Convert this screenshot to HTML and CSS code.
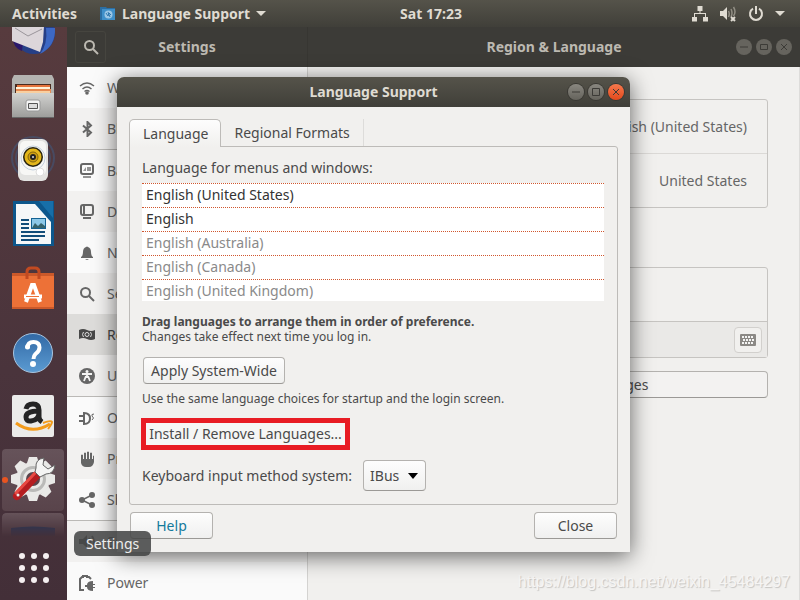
FILE: index.html
```html
<!DOCTYPE html>
<html lang="en">
<head>
<meta charset="utf-8">
<title>Language Support</title>
<link rel="stylesheet" href="styles.css">
</head>
<body>
<header class="topbar">
  <button class="top-item" type="button">Activities</button>
  <button class="top-item app-menu" type="button">
    <svg width="16" height="16" viewBox="0 0 16 16" aria-hidden="true"><path d="M0 1h6l1 1h8v12H0z" fill="#2b6ea3"/><path d="M2 3h13v11H2z" fill="#3f8fc9"/><circle cx="8.500" cy="8.500" r="4" fill="#9cc7e6"/><path d="M6 7l2 3 1-3 2 2M8 6l2 5" stroke="#2f77ae" fill="none"/></svg>
    <span>Language Support</span>
    <svg width="10" height="6" viewBox="0 0 10 6" aria-hidden="true"><path d="M0 0h10L5 5z" fill="#dfdbd2"/></svg>
  </button>
  <time class="clock">Sat 17:23</time>
  <button class="top-item status" type="button" aria-label="System">
    <svg width="16" height="16" viewBox="0 0 16 16" fill="#dfdbd2" aria-hidden="true"><path d="M5.500 0h5v5h-2v2H14v4h2v4.500h-5V11h2V8H3v3h2v4.500H0V11h2V7h5.500V5h-2z"/></svg>
    <svg width="18" height="16" viewBox="0 0 18 16" aria-hidden="true"><path d="M1 5h3l4-4v13l-4-4H1z" fill="#dfdbd2"/><g fill="none" stroke="#918e84" stroke-width="1.500"><path d="M9.500 5q1.500 3 0 6M12 3q2 4 0 8M14.500 1q3 5 0 9"/></g><path d="M12 11l4 4M16 11l-4 4" stroke="#dfdbd2" stroke-width="2"/></svg>
    <svg width="16" height="16" viewBox="0 0 16 16" fill="none" stroke="#dfdbd2" stroke-width="2" aria-hidden="true"><path d="M5 2.700a6 6 0 1 0 6 0M8 0v8"/></svg>
    <svg width="10" height="6" viewBox="0 0 10 6" aria-hidden="true"><path d="M0 0h10L5 5z" fill="#dfdbd2"/></svg>
  </button>
</header>

<div class="desktop">
  <nav class="launcher" aria-label="Applications">
    <div class="dock">
      <button class="dock-item" type="button" aria-label="Mail"><svg viewBox="0 0 48 48"><circle cx="25" cy="25" r="21" fill="#263f86"/><path d="M37 20h9q1 18-15 26 8-10 6-26z" fill="#3d68c4"/><path d="M3 28q1 12 10 15L14 34z" fill="#2a176b"/><path d="M3 14l32 4-1 16-3 10L3 33z" fill="#dcd6da"/><path d="M6 20l13 8 14-7" fill="none" stroke="#9a959b"/></svg></button>
      <button class="dock-item" type="button" aria-label="Files"><svg viewBox="0 0 48 48"><path d="M5 3h38l2 4v39H3V7z" fill="#b4b4b1"/><path d="M6 12h36v11H6z" fill="#4a2b20"/><path d="M8 13h33v2H8z" fill="#e5743d"/><path d="M7 15h34v8H7z" fill="#fff2d9"/><path d="M7 17h35v6H7z" fill="#e68a52"/><path d="M7 19h34v2H7z" fill="#f8cfa0"/><path d="M3 21h42v25H3z" fill="url(#metal)"/><path d="M3 45h42v1H3z" fill="#666"/><rect x="17" y="28" width="14" height="11" rx="2" fill="#f5f5f5" stroke="#999"/><path d="M19.500 31.500h9v5h-9z" fill="#ddd" stroke="#555"/></svg></button>
      <button class="dock-item" type="button" aria-label="Music"><svg viewBox="0 0 48 48"><g fill="none" stroke="#3f5d86" opacity=".5"><circle cx="24" cy="22" r="17" stroke-width="2"/><circle cx="24" cy="22" r="21" stroke-width="2"/></g><rect x="9" y="3" width="30" height="42" rx="6" fill="#e3e3e1"/><rect x="11" y="5" width="26" height="34" rx="5" fill="#f7f7f5"/><g fill="none" stroke="#c4d1df"><circle cx="24" cy="22" r="12"/></g><circle cx="24" cy="21" r="10" fill="#282410"/><circle cx="24" cy="21" r="8.500" fill="#e3b61b"/><circle cx="24" cy="21" r="5" fill="#cf9f13" stroke="#82650f"/><circle cx="24" cy="21" r="3" fill="#222"/><circle cx="24" cy="21" r="1" fill="#ddd"/><circle cx="31" cy="36" r="4" fill="#fff" stroke="#ddd"/></svg></button>
      <button class="dock-item" type="button" aria-label="Writer"><svg viewBox="0 0 48 48"><path d="M4 1h41v45H4z" fill="#0d578c"/><path d="M30 1h14v17z" fill="#176fa9"/><path d="M7 4h19l16 18v22H7z" fill="#f5f7f8"/><path d="M12 19h8v2h-8zm0 4h8v2h-8zm0 4h8v2h-8zm0 4h24v2H12zm0 4h24v2H12zm0 4h18v2H12z" fill="#124d79"/><path d="M22 18h15v11H22z" fill="#146293"/><path d="M23 19h13v9H23z" fill="#8cc8e8"/><path d="M23 28l3-5 3 3 3-3 4 3v2z" fill="#36636c"/></svg></button>
      <button class="dock-item" type="button" aria-label="Software"><svg viewBox="0 0 48 48"><path d="M3 9h42v36H3z" fill="#ed7137"/><path d="M3 9h42v3H3zM3 43h42v2H3z" fill="#cb592a"/><path d="M18 15V8q0-4 4-4h4q4 0 4 4v7" fill="none" stroke="#c24a21" stroke-width="3"/><path d="M17 38l6-17h2l6 17" fill="none" stroke="#fff" stroke-width="4"/><path d="M15 32.500h18" stroke="#fff" stroke-width="4"/><path d="M17 32.500h13" stroke="#ed7137"/></svg></button>
      <button class="dock-item" type="button" aria-label="Help"><svg viewBox="0 0 48 48"><circle cx="24" cy="25" r="19.500" fill="url(#blue)" stroke="#a8c5e0"/><path d="M18.500 20q0-6 6-6 6 0 6 5.500 0 3.500-4 6.500-2 2-2 5" fill="none" stroke="#fff" stroke-width="4"/><circle cx="18.500" cy="19" r="2.500" fill="#fff"/><circle cx="24" cy="36" r="3" fill="#fff"/></svg></button>
      <button class="dock-item" type="button" aria-label="Shopping"><svg viewBox="0 0 48 48"><rect x="3" y="3" width="42" height="42" rx="2" fill="#ebebea"/><path d="M17 17q1-5 7-5 6 0 6 6v7q0 3 3 5M30 19q-13 0-13 6 0 4.500 5 4 8-1 8-8" fill="none" stroke="#242424" stroke-width="5"/><path d="M7 31q16 12 34 1" fill="none" stroke="#f39b1b" stroke-width="3"/><path d="M34 31q8-3 9-1 0 2-4 7" fill="none" stroke="#f39b1b" stroke-width="2"/></svg></button>
      <button class="dock-item running" type="button" aria-label="Settings"><svg viewBox="0 0 48 48"><g transform="translate(24 23)" fill="#e9e9e7"><circle r="17"/><path id="tooth" d="M-4-22h8l2 6H-6zM-4 22h8l2-6H-6zM-22-4v8l6 2V-6zM22-4v8l-6 2V-6z"/><use href="#tooth" transform="rotate(45)"/><circle r="11.500" fill="none" stroke="#babab8" stroke-width="3"/><circle r="7" fill="#59454c"/></g><path d="M8 40L28 19" stroke="#b51d20" stroke-width="8" stroke-linecap="round"/><path d="M7 37L26 17" stroke="#e84a43" stroke-width="3" stroke-linecap="round"/><path d="M26 16l5 5 6-3q8 0 9-9l-7 4-5-4 1-7q-9 1-8 10z" fill="#f5f5f4" stroke="#666"/><circle cx="9" cy="39" r="1.500" fill="#eee"/></svg></button>
      <button class="dock-item window" type="button" aria-label="Language Support"><svg viewBox="0 0 48 48"><path d="M2 8q22-3 44 0v36H2z" fill="#1d3a66"/></svg></button>
    </div>
    <button class="apps" type="button" aria-label="Show Applications"><i></i><i></i><i></i><i></i><i></i><i></i><i></i><i></i><i></i></button>
    <span class="tooltip" role="tooltip">Settings</span>
  </nav>

  <main class="settings">
    <header class="win-head">
      <div class="side-head">
        <button class="search" type="button" aria-label="Search"><svg width="16" height="16" viewBox="0 0 16 16" fill="none" stroke="#bcb9b1" stroke-width="2"><circle cx="6.500" cy="6.500" r="4.500"/><path d="M10 10l5 5"/></svg></button>
        <h2>Settings</h2>
      </div>
      <div class="main-head">
        <h2>Region &amp; Language</h2>
        <div class="controls">
          <button class="ctl" type="button" aria-label="Minimize"><svg viewBox="0 0 16 16"><path d="M4 8h8"/></svg></button>
          <button class="ctl" type="button" aria-label="Maximize"><svg viewBox="0 0 16 16"><path d="M4.500 5.500h7v5h-7z"/></svg></button>
          <button class="ctl" type="button" aria-label="Close window"><svg viewBox="0 0 16 16"><path d="M5 5l6 6M11 5l-6 6"/></svg></button>
        </div>
      </div>
    </header>
    <div class="win-body">
      <nav class="sidebar" aria-label="Settings panels">
        <a href="#" class="row"><svg viewBox="0 0 16 16"><g fill="none" stroke="currentColor" stroke-width="1.500"><path d="M1 6q7-6 14 0M3.500 9q4.500-4 9 0M5.500 11.500q2.500-2 5 0"/></g><circle cx="8" cy="13" r="1.800"/></svg>Wi-Fi</a>
        <a href="#" class="row"><svg viewBox="0 0 16 16"><path d="M4 4.500l8 7L8.500 15V1L12 4.500l-8 7" fill="none" stroke="currentColor" stroke-width="2"/></svg>Bluetooth</a>
        <a href="#" class="row sep"><svg viewBox="0 0 16 16"><rect x="2" y="1" width="12" height="10" rx="2" fill="none" stroke="currentColor" stroke-width="2"/><path d="M4 8l3-4v4zM8 4h4v4H8zM4 13h8v2H4z" opacity=".7"/></svg>Background</a>
        <a href="#" class="row"><svg viewBox="0 0 16 16"><rect x="2" y="1" width="12" height="10" rx="2" fill="none" stroke="currentColor" stroke-width="2"/><path d="M4 2h2v8H4zM4 13h8v2H4z"/></svg>Dock</a>
        <a href="#" class="row"><svg viewBox="0 0 16 16"><path d="M2 12q2-1 2-5 0-4 3-5 1-1 2 0 3 1 3 5 0 4 2 5v1H2zM6 14h4l-2 1z"/></svg>Notifications</a>
        <a href="#" class="row"><svg viewBox="0 0 16 16"><g fill="none" stroke="currentColor" stroke-width="2"><circle cx="6.500" cy="6.500" r="4.500"/><path d="M10 10l5 5"/></g></svg>Search</a>
        <a href="#" class="row selected"><svg viewBox="0 0 16 16"><path d="M0 3q4-2 8 0t8 0v9q-4 2-8 0t-8 0z"/><g fill="none" stroke="#ddd"><circle cx="8" cy="7.500" r="2"/><path d="M4.500 5q-2 2.500 0 5M11.500 5q2 2.500 0 5"/></g></svg>Region &amp; Language</a>
        <a href="#" class="row"><svg viewBox="0 0 16 16"><circle cx="8" cy="8" r="8"/><g stroke="#f4f4f3" fill="none"><path d="M3 6h10M8 6v4M7 8l-2 5M9 8l2 5" stroke-width="1.800"/></g><circle cx="8" cy="3.500" r="1.500" fill="#f4f4f3"/></svg>Universal Access</a>
        <a href="#" class="row sep"><svg viewBox="0 0 16 16"><path d="M0 5h5v2H0zM0 10h5v2H0z"/><path d="M5 3q6 0 6 5.500T5 14z" fill="none" stroke="currentColor" stroke-width="2"/><path d="M15 4q-3 0-2 2 3 2 0 4" fill="none" stroke="currentColor"/></svg>Online Accounts</a>
        <a href="#" class="row"><svg viewBox="0 0 16 16"><path d="M2 8V4q1-1 2 0v4h1V2q1-1 2 0v6h1V1q1-1 2 0v7h1V2q1-1 2 0v6h1V5q1-1 1 0v6q-1 5-5 5H7q-4 0-5-4z"/></svg>Privacy</a>
        <a href="#" class="row"><svg viewBox="0 0 16 16"><path d="M13 3L3 8l10 5" fill="none" stroke="currentColor" stroke-width="1.500"/><circle cx="13" cy="3" r="3"/><circle cx="3" cy="8" r="3"/><circle cx="13" cy="13" r="3"/></svg>Sharing</a>
        <a href="#" class="row sep"><svg viewBox="0 0 16 16"><path d="M0 5h4l4-4v13l-4-4H0z"/><path d="M10 4q3 4 0 8M13 2q4 6 0 12" fill="none" stroke="currentColor" stroke-width="2"/></svg>Sound</a>
        <a href="#" class="row"><svg viewBox="0 0 16 16"><path d="M5 15H1V4l2-2h1V1h4v1h2l2 2" fill="none" stroke="currentColor" stroke-width="2"/><path d="M14 6q-6 0-6 4H6v2h2q0 4 6 4v-3h2v-1h-2v-2h2V9h-2z"/></svg>Power</a>
      </nav>
      <section class="content">
        <div class="card first">
          <div class="card-row">English (United States)</div>
          <div class="card-row">United States</div>
        </div>
        <div class="card sources">
          <div class="card-row"></div>
          <div class="tools"><button class="keys" type="button" aria-label="Keyboard layout"><svg width="16" height="12" viewBox="0 0 16 12"><rect width="16" height="12" rx="1" fill="#8b8985"/><path d="M2 3h12M3 6h11M2 9h12" stroke="#f4f4f3" stroke-width="1.800" stroke-dasharray="2 1"/></svg></button></div>
        </div>
        <button class="btn manage" type="button">Manage Installed Languages</button>
      </section>
    </div>
  </main>

  <section class="dialog" role="dialog" aria-labelledby="dialog-title">
    <header class="dialog-head">
      <h1 id="dialog-title">Language Support</h1>
      <div class="controls">
        <button class="ctl" type="button" aria-label="Minimize dialog"><svg viewBox="0 0 16 16"><path d="M4 8h8"/></svg></button>
        <button class="ctl" type="button" aria-label="Maximize dialog"><svg viewBox="0 0 16 16"><path d="M4.500 4.500h7v7h-7z"/></svg></button>
        <button class="ctl close" type="button" aria-label="Close dialog"><svg viewBox="0 0 16 16"><path d="M5 5l6 6M11 5l-6 6"/></svg></button>
      </div>
    </header>
    <div class="dialog-body">
      <div class="tabs" role="tablist">
        <button class="tab active" type="button" role="tab" aria-selected="true">Language</button>
        <button class="tab" type="button" role="tab" aria-selected="false">Regional Formats</button>
      </div>
      <div class="panel" role="tabpanel">
        <p class="caption" id="list-label">Language for menus and windows:</p>
        <ul class="langs" aria-labelledby="list-label">
          <li>English (United States)</li>
          <li>English</li>
          <li class="off">English (Australia)</li>
          <li class="off">English (Canada)</li>
          <li class="off">English (United Kingdom)</li>
        </ul>
        <p class="note"><strong>Drag languages to arrange them in order of preference.</strong><br>Changes take effect next time you log in.</p>
        <button class="btn apply" type="button">Apply System-Wide</button>
        <p class="note">Use the same language choices for startup and the login screen.</p>
        <button class="install" type="button">Install / Remove Languages...</button>
        <div class="field">
          <label for="method">Keyboard input method system:</label>
          <span class="picker"><select class="btn" id="method"><option>IBus</option></select><svg width="10" height="6" viewBox="0 0 10 6" aria-hidden="true"><path d="M0 0h10L5 6z"/></svg></span>
        </div>
      </div>
      <footer class="actions">
        <button class="btn help" type="button">Help</button>
        <button class="btn" type="button">Close</button>
      </footer>
    </div>
  </section>
  <span class="watermark">https://blog.csdn.net/weixin_45484297</span>
</div>

<svg class="defs" width="0" height="0" aria-hidden="true">
  <linearGradient id="metal" x2="0" y2="1"><stop stop-color="#d2d2d0"/><stop offset="1" stop-color="#9b9b99"/></linearGradient>
  <linearGradient id="blue" x2="0" y2="1"><stop stop-color="#3269a5"/><stop offset="1" stop-color="#5b9bd2"/></linearGradient>
</svg>
</body>
</html>
```
FILE: styles.css
```css
* { box-sizing: border-box; }
body {
  margin: 0;
  height: 100vh;
  display: flex;
  flex-direction: column;
  overflow: hidden;
  font: 14px/20px "Noto Sans", "Open Sans", sans-serif;
  color: #4a4a4a;
  background: #f1f0ee;
}
h1, h2, p, ul { margin: 0; padding: 0; }
h1, h2 { font-size: 14px; font-weight: 700; }
button, select { font: inherit; color: inherit; margin: 0; padding: 0; border: 0; background: none; }
svg { flex: none; }
.defs { position: absolute; }

.topbar {
  flex: none;
  height: 27px;
  display: grid;
  grid-template-columns: auto 1fr auto 1fr;
  align-items: center;
  padding: 0 15px 0 12px;
  background: linear-gradient(#55534a, #403f39);
  color: #dfdbd2;
  font-weight: 700;
}
.top-item { display: flex; align-items: center; gap: 6px; }
.app-menu { justify-self: start; margin-left: 23px; }
.status { gap: 11px; justify-self: end; }

.desktop { position: relative; flex: 1; min-height: 0; display: flex; }

.launcher {
  position: relative;
  z-index: 3;
  flex: none;
  width: 67px;
  display: flex;
  flex-direction: column;
  background: linear-gradient(#573b3e, #4a343c 60%, #432f38);
}
.dock { flex: 1; min-height: 0; overflow: hidden; display: flex; flex-direction: column; gap: 2px; }
.dock-item {
  position: relative;
  flex: none;
  width: 62px;
  height: 62px;
  margin-left: 2px;
  display: grid;
  place-items: center;
  border-radius: 4px;
}
.dock-item svg { width: 48px; height: 48px; }
.dock-item:first-child { margin-top: -26px; }
.running, .window { background: linear-gradient(#66535a, #59444b); }
.running::before {
  content: "";
  position: absolute;
  left: 0;
  top: 28px;
  width: 6px;
  height: 6px;
  border-radius: 50%;
  background: #e95420;
}
.window { -webkit-mask-image: linear-gradient(#000, transparent 24px); mask-image: linear-gradient(#000, transparent 24px); }
.apps {
  flex: none;
  height: 64px;
  display: grid;
  grid-template-columns: repeat(3, 6px);
  gap: 6px;
  place-content: center;
}
.apps i { width: 6px; height: 6px; border-radius: 50%; background: #f5eff0; }
.tooltip {
  position: absolute;
  left: 74px;
  bottom: 44px;
  padding: 3px 12px 2px;
  border-radius: 6px;
  background: rgba(66, 68, 67, .86);
  color: #eee;
}

.settings { flex: 1; min-width: 0; display: flex; flex-direction: column; }
.win-head { flex: none; height: 40px; display: flex; background: #3c3b37; color: #bcb9b1; }
.side-head {
  flex: none;
  width: 241px;
  display: flex;
  align-items: center;
  padding: 0 8px;
  border-right: 1px solid #373632;
}
.side-head h2 { flex: 1; text-align: center; margin-right: 31px; }
.search { width: 31px; height: 32px; display: grid; place-items: center; border: 1px solid #46453f; border-radius: 3px; }
.main-head { flex: 1; display: flex; align-items: center; padding-right: 8px; }
.main-head h2 { flex: 1; text-align: center; margin-left: 64px; }
.controls { display: flex; gap: 4px; }
.ctl { width: 16px; height: 16px; border-radius: 50%; background: #66645e; }
.ctl svg { display: block; fill: none; stroke: #3c3b37; }

.win-body { flex: 1; min-height: 0; display: flex; }
.sidebar { flex: none; width: 241px; overflow: hidden; border-right: 1px solid #d4d3d1; }
.row {
  height: 41px;
  display: flex;
  align-items: center;
  gap: 12px;
  padding-left: 12px;
  color: #666;
  background: #f2f1f0;
  text-decoration: none;
}
.row:nth-child(odd) { background: #fafafa; }
.row.sep { height: 42px; border-top: 1px solid #bbb9b6; }
.row.selected { background: #dddcda; color: #484848; }
.row svg { width: 16px; height: 16px; fill: currentColor; }

.content { flex: 1; min-width: 0; padding: 32px 31px 0; border-right: 1px solid #dddcda; }
.card { border: 1px solid #c6c4c1; border-radius: 3px; }
.card-row { height: 53px; display: flex; align-items: center; justify-content: flex-end; padding-right: 20px; color: #666; }
.card.first .card-row + .card-row { height: 54px; border-top: 1px solid #dbd9d6; }
.sources { margin: 59px 0 13px; }
.tools { height: 36px; display: flex; align-items: center; justify-content: flex-end; padding-right: 5px; border-top: 1px solid #c6c4c1; background: #eae9e7; }
.keys { width: 28px; height: 26px; display: grid; place-items: center; border: 1px solid #d2d0cd; border-radius: 4px; background: #f1f0ee; }

.btn {
  height: 27px;
  border: 1px solid #b4b2af;
  border-bottom-color: #9b9996;
  border-radius: 4px;
  background: linear-gradient(#fdfdfd, #f0f0ef);
}
.manage { display: block; width: 100%; background: #f3f2f1; }

.dialog {
  position: absolute;
  z-index: 2;
  top: 50px;
  left: 117px;
  right: 170px;
  background: #f1f0ee;
  border-radius: 7px 7px 0 0;
  box-shadow: 0 4px 22px rgba(0, 0, 0, .6);
}
.dialog-head {
  height: 30px;
  display: flex;
  align-items: center;
  padding-right: 6px;
  border-radius: 7px 7px 0 0;
  background: linear-gradient(#55534a, #403f39);
  color: #dfdbd2;
}
.dialog-head h1 { flex: 1; text-align: center; margin-left: 62px; }
.dialog .ctl { background: linear-gradient(#898780, #65635c); box-shadow: 0 0 0 1px #3a3934; }
.dialog .ctl.close { background: linear-gradient(#f7794d, #e2491c); }
.dialog-body { padding: 12px 12px 13px; }
.tabs { display: flex; }
.tab { height: 27px; padding: 0 13px; border-right: 1px solid #dddcda; }
.tab.active {
  height: 28px;
  margin-bottom: -1px;
  padding: 0 12px 0 13px;
  position: relative;
  border: 1px solid #bdbbb8;
  border-bottom: 0;
  border-radius: 5px 5px 0 0;
  background: linear-gradient(#fdfdfd, #f1f0ee);
}
.panel {
  display: flex;
  flex-direction: column;
  align-items: flex-start;
  padding: 11px 13px 13px 12px;
  border: 1px solid #bdbbb8;
  border-radius: 0 3px 3px 3px;
}
.langs { align-self: stretch; margin: 5px 0 13px; list-style: none; background: #fff; color: #333; }
.langs li { height: 24px; line-height: 22px; padding-left: 4px; border-top: 1px dotted #d0572f; }
.langs li:last-child { height: 22px; }
.langs .off { color: #8a8a8a; }
.note { font-size: 12px; line-height: 15px; }
.apply { width: 142px; margin: 13px 0 7px 1px; }
.install { width: 209px; height: 32px; margin: 12px 0 10px -1px; border: 5px solid #e81c24; background: #f6f6f5; line-height: 20px; white-space: nowrap; }
.field { display: flex; align-items: center; gap: 11px; }
.picker { position: relative; display: flex; }
.picker select { appearance: none; width: 63px; height: 31px; padding-left: 6px; }
.picker svg { position: absolute; right: 8px; top: 13px; pointer-events: none; }
.actions { display: flex; justify-content: space-between; padding: 7px 1px 0; }
.actions .btn { width: 83px; }
.help { color: #147a9c; }

.watermark {
  position: absolute;
  right: 10px;
  bottom: 8px;
  font: 16px/20px "Liberation Sans", Arial, sans-serif;
  color: #f6f5f4;
  text-shadow: 1px 1px 1px #c4c3c1;
}
```
